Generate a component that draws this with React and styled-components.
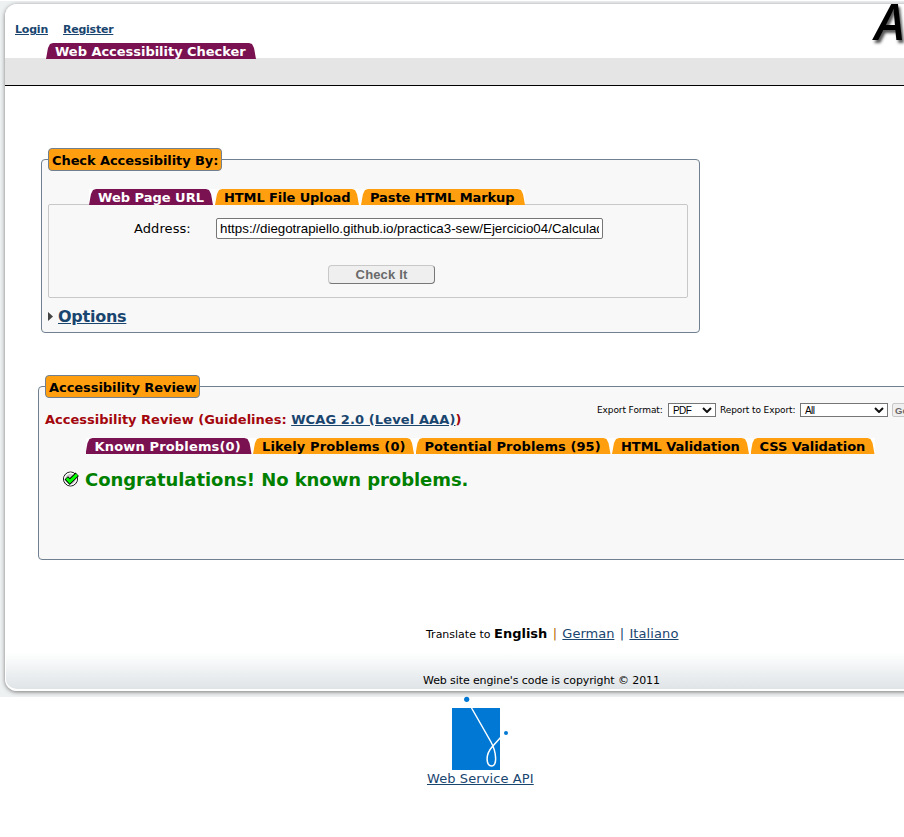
import React from "react";
import styled, { createGlobalStyle } from "styled-components";

const Global = createGlobalStyle`
  * { box-sizing: border-box; }
  html, body { margin: 0; height: 837px; overflow: hidden; background: #fff; }
  body { font: 13px/16px "DejaVu Sans", sans-serif; color: #000; }
`;

const Shell = styled.div`
  height: 697px;
  padding: 4px 0 0 5px;
  border-top: 1px solid #fff;
  background: #eef1f2;
  overflow: hidden;
`;
const Card = styled.main`
  width: 1100px;
  height: 687px;
  margin-top: -1px;
  display: flex;
  flex-direction: column;
  border: 1px solid #fff;
  border-width: 0 0 2px 1px;
  border-radius: 12px;
  background: linear-gradient(#fff 0, #fff 648px, #dfe4e7 100%);
  box-shadow: 0 1px 4px #777;
`;
const Top = styled.header`
  height: 54px;
  display: flex;
  flex-shrink: 0;
  justify-content: space-between;
`;
const LinkBar = styled.nav`
  display: flex;
  gap: 15px;
  padding: 18px 0 0 9px;
`;
const Link = styled.a`
  color: #19456f;
  text-decoration: underline;
  font-size: ${(p) => p.$size || 13}px;
  font-weight: ${(p) => (p.$bold ? 700 : 400)};
  letter-spacing: ${(p) => p.$ls || 0}px;
`;
const Brand = styled.div`
  width: 230px;
  height: 50px;
  color: #000;
  font: italic 600 50px/34px "Open Sans", sans-serif;
  letter-spacing: 2px;
  text-shadow: 2px 3px 3px #555;
`;
const Strip = styled.div`
  height: 28px;
  flex-shrink: 0;
  margin-left: -1px;
  padding-left: 41px;
  background: #e5e5e5;
  border-bottom: 1px solid #000;
`;
const TabShape = styled.div`
  width: ${(p) => p.$w}px;
  height: 16px;
  padding-left: 9px;
  flex-shrink: 0;
  overflow: hidden;
  white-space: nowrap;
  background: ${(p) => (p.$active ? "#7a1150" : "#ff9f0f")};
  color: ${(p) => (p.$active ? "#fff" : "#000")};
  font-size: 13px;
  font-weight: 700;
  line-height: 17px;
  letter-spacing: ${(p) => p.$ls || 0}px;
  clip-path: polygon(0 100%, 2px 5px, 4px 1px, 7px 0, calc(100% - 7px) 0, calc(100% - 4px) 1px, calc(100% - 2px) 5px, 100% 100%);
`;
const SiteTab = styled(TabShape)`
  margin-top: -15px;
`;
const Panel = styled.section`
  width: ${(p) => p.$w}px;
  height: 174px;
  flex-shrink: 0;
  margin: ${(p) => p.$margin};
  padding-left: 6px;
  display: flex;
  flex-direction: column;
  align-items: flex-start;
  border: 1px solid #708090;
  border-radius: 4px;
  background: #f8f8f8;
`;
const Legend = styled.h2`
  width: ${(p) => p.$w}px;
  height: 23px;
  flex-shrink: 0;
  margin: -12px 0 0;
  padding-left: 3px;
  border: 1px solid #708090;
  border-radius: 4px;
  background: #ff9f0f;
  font-size: 13px;
  line-height: 23px;
  white-space: nowrap;
  letter-spacing: ${(p) => p.$ls || 0}px;
`;
const Tabs = styled.div`
  display: flex;
  flex-shrink: 0;
  gap: ${(p) => p.$gap || 2}px;
  margin: ${(p) => p.$margin};
  background: #fff;
  z-index: 1;
`;
const Box = styled.form`
  width: 640px;
  height: 94px;
  flex-shrink: 0;
  margin-top: -1px;
  border: 1px solid #c8c8c8;
  border-radius: 2px;
`;
const Field = styled.label`
  display: flex;
  align-items: center;
  padding: 13px 0 0 85px;
`;
const FieldName = styled.span`
  width: 82px;
  letter-spacing: 0.08px;
`;
const UrlInput = styled.input`
  width: 387px;
  height: 21px;
  padding: 1px 3px;
  border: 1px solid #767676;
  border-radius: 2px;
  background: #fff;
  font: 13.33px "Liberation Sans", sans-serif;
`;
const CheckButton = styled.button`
  display: block;
  width: 107px;
  height: 19px;
  margin: 26px 0 0 279px;
  padding: 0;
  border: 1px solid;
  border-color: #c8c8c8 #777 #777 #c8c8c8;
  border-radius: 4px;
  background: #efefef;
  color: #696969;
  font: 700 13px/15px "Liberation Sans", sans-serif;
  letter-spacing: 0.15px;
`;
const Options = styled.div`
  display: flex;
  align-items: center;
  gap: 5px;
  margin-top: 9px;
  height: 19px;
`;
const ReviewHead = styled.div`
  display: flex;
  width: 940px;
  height: 40px;
  align-items: flex-start;
`;
const Guidelines = styled.h3`
  width: 552px;
  margin: 14px 0 0;
  color: #a3060c;
  font-size: 13px;
  line-height: 16px;
  white-space: nowrap;
`;
const Export = styled.div`
  display: flex;
  align-items: center;
  height: 16px;
  margin-top: 4px;
  font-size: 9px;
  white-space: nowrap;
`;
const ExportLabel = styled.span`
  width: ${(p) => p.$w}px;
  height: 17px;
  line-height: 16px;
  letter-spacing: -0.1px;
`;
const Select = styled.div`
  display: flex;
  justify-content: space-between;
  align-items: center;
  width: ${(p) => p.$w}px;
  height: 14px;
  margin-right: 4px;
  padding: 0 3px 0 4px;
  border: 1px solid #767676;
  background: #fff;
  font: 10px/11px "Liberation Sans", sans-serif;
  letter-spacing: -0.6px;
`;
const FileButton = styled.button`
  height: 14px;
  padding: 0 2px;
  border: 1px solid #c8c8c8;
  border-radius: 2px;
  background: #efefef;
  color: #696969;
  font: 700 9.5px "Liberation Sans", sans-serif;
`;
const Result = styled.div`
  display: flex;
  align-items: center;
  gap: 6px;
  margin: 15px 0 0 18px;
  color: #008000;
  font-size: 18px;
  font-weight: 700;
  line-height: 22px;
  white-space: nowrap;
  letter-spacing: -0.06px;
`;
const CheckIcon = styled.svg`
  margin-top: -2px;
`;
const Translate = styled.div`
  display: flex;
  align-items: baseline;
  margin: 66px 0 0 420px;
  white-space: nowrap;
`;
const Small = styled.span`
  font-size: 11px;
  width: 68px;
`;
const Sep = styled.span`
  width: 15px;
  text-align: center;
  color: ${(p) => p.$c};
`;
const Copyright = styled.div`
  margin: 30px 0 0 417px;
  font-size: 11px;
  white-space: nowrap;
  letter-spacing: -0.1px;
`;
const Api = styled.footer`
  display: flex;
  flex-direction: column;
  align-items: flex-start;
  padding-left: 427px;
  white-space: nowrap;
`;
const ApiLogo = styled.svg`
  display: block;
  width: 60px;
  height: 74px;
  margin: -1px 0 1px 25px;
`;

const Chevron = () => (
  <svg width="10" height="6" viewBox="0 0 10 6" fill="none" stroke="#111" strokeWidth="2">
    <path d="M1 1l4 4 4-4" />
  </svg>
);

const inputTabs = [
  ["Web Page URL", 124, 0],
  ["HTML File Upload", 144, -0.1],
  ["Paste HTML Markup", 164, -0.1],
];
const resultTabs = [
  ["Known Problems(0)", 166, 0.16],
  ["Likely Problems (0)", 161, 0.11],
  ["Potential Problems (95)", 195, 0.08],
  ["HTML Validation", 137, -0.05],
  ["CSS Validation", 124, -0.05],
];

export default function App() {
  return (
    <>
      <Global />
      <Shell>
        <Card>
          <Top>
            <LinkBar>
              <Link $size={11} $bold $ls={-0.2}>Login</Link>
              <Link $size={11} $bold $ls={-0.25}>Register</Link>
            </LinkBar>
            <Brand>AChecker</Brand>
          </Top>
          <Strip>
            <SiteTab $active $w={210} $ls={-0.03}>Web Accessibility Checker</SiteTab>
          </Strip>
          <Panel $w={659} $margin="73px 0 0 35px">
            <Legend $w={174} $ls={-0.08}>Check Accessibility By:</Legend>
            <Tabs $margin="18px 0 0 41px">
              {inputTabs.map(([label, w, ls], i) => (
                <TabShape key={label} $w={w} $ls={ls} $active={i === 0}>{label}</TabShape>
              ))}
            </Tabs>
            <Box>
              <Field>
                <FieldName>Address:</FieldName>
                <UrlInput readOnly value="https://diegotrapiello.github.io/practica3-sew/Ejercicio04/Calculadora.html" />
              </Field>
              <CheckButton type="button">Check It</CheckButton>
            </Box>
            <Options>
              <svg width="5" height="9" viewBox="0 0 5 9"><path d="M0 0l5 4.5L0 9z" fill="#444" /></svg>
              <Link $size={16} $bold $ls={-0.25}>Options</Link>
            </Options>
          </Panel>
          <Panel $w={1000} $margin="53px 0 0 32px">
            <Legend $w={155} $ls={-0.06}>Accessibility Review</Legend>
            <ReviewHead>
              <Guidelines>
                Accessibility Review (Guidelines: <Link $bold $ls={0.11}>WCAG 2.0 (Level AAA)</Link>)
              </Guidelines>
              <Export>
                <ExportLabel $w={71}>Export Format:</ExportLabel>
                <Select $w={48}>PDF<Chevron /></Select>
                <ExportLabel $w={80}>Report to Export:</ExportLabel>
                <Select $w={88}>All<Chevron /></Select>
                <FileButton>Get File</FileButton>
              </Export>
            </ReviewHead>
            <Tabs $gap={1.5} $margin="0 0 0 40.5px">
              {resultTabs.map(([label, w, ls], i) => (
                <TabShape key={label} $w={w} $ls={ls} $active={i === 0}>{label}</TabShape>
              ))}
            </Tabs>
            <Result>
              <CheckIcon width="16" height="16" viewBox="0 0 16 16">
                <circle cx="7.5" cy="8" r="7" fill="#ccc" stroke="#111" />
                <circle cx="7.5" cy="8" r="5.8" fill="none" stroke="#fff" strokeWidth="1.2" />
                <path d="M3.3 6.8l3.5 3.7 7.4-7.2" fill="none" stroke="#000" strokeWidth="4.8" />
                <path d="M3.8 7.2l3 3.3 7.1-6.8" fill="none" stroke="#0f0" strokeWidth="3" />
              </CheckIcon>
              Congratulations! No known problems.
            </Result>
          </Panel>
          <Translate>
            <Small>Translate to</Small>
            <b>English</b>
            <Sep $c="#b36b00">|</Sep>
            <Link>German</Link>
            <Sep $c="#19456f">|</Sep>
            <Link $ls={0.1}>Italiano</Link>
          </Translate>
          <Copyright>Web site engine's code is copyright © 2011</Copyright>
        </Card>
      </Shell>
      <Api>
        <ApiLogo viewBox="0 0 60 74">
          <path d="M0 12h48v62H0z" fill="#0078d4" />
          <circle cx="14.7" cy="3.3" r="2.6" fill="#0078d4" />
          <circle cx="54" cy="37" r="2" fill="#0078d4" />
          <path d="M19 11L39 46C45 57 45 70 40 70C34 70 33 59 40 51L49 41" fill="none" stroke="#fff" strokeWidth="1.5" />
        </ApiLogo>
        <Link $ls={0.1}>Web Service API</Link>
      </Api>
    </>
  );
}
